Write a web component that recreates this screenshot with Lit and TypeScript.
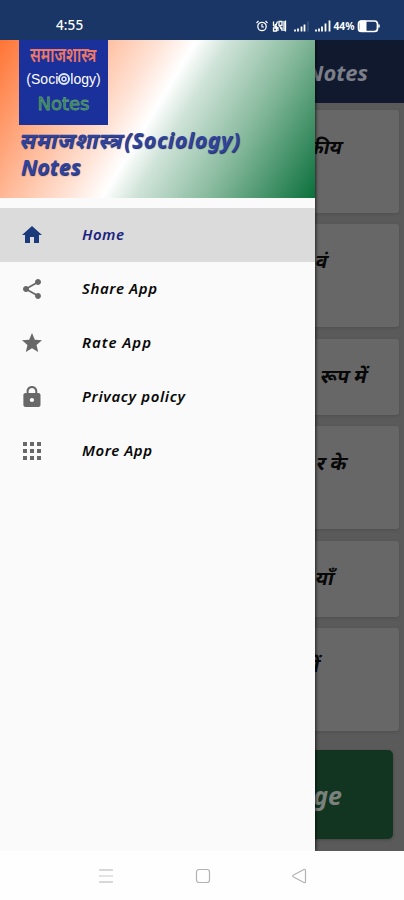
import { LitElement, html, css, svg } from "lit";
import { customElement } from "lit/decorators.js";

const menu = [
  { label: "Home", width: 42, active: true, icon: svg`<path d="M10 20v-6h4v6h5v-8h3L12 3 2 12h3v8z"/>` },
  { label: "Share App", width: 75, icon: svg`<path d="M18 16.08c-.76 0-1.44.3-1.96.77L8.91 12.7c.05-.23.09-.46.09-.7s-.04-.47-.09-.7l7.05-4.11c.54.5 1.25.81 2.04.81 1.66 0 3-1.34 3-3s-1.34-3-3-3-3 1.34-3 3c0 .24.04.47.09.7L8.04 9.81C7.5 9.31 6.79 9 6 9c-1.66 0-3 1.34-3 3s1.34 3 3 3c.79 0 1.5-.31 2.04-.81l7.12 4.16c-.05.21-.08.43-.08.65 0 1.61 1.31 2.92 2.92 2.92s2.92-1.31 2.92-2.92-1.31-2.92-2.92-2.92z"/>` },
  { label: "Rate App", width: 69, icon: svg`<path d="M12 17.27 18.18 21l-1.64-7.03L22 9.24l-7.19-.61L12 2 9.19 8.63 2 9.24l5.46 4.73L5.82 21z"/>` },
  { label: "Privacy policy", width: 103, icon: svg`<path d="M18 8h-1V6c0-2.76-2.24-5-5-5S7 3.240 7 6v2H6c-1.100 0-2 .9-2 2v10c0 1.100.9 2 2 2h12c1.100 0 2-.9 2-2V10c0-1.100-.9-2-2-2zm-6 9c-1.100 0-2-.9-2-2s.9-2 2-2 2 .9 2 2-.9 2-2 2zm3.100-9H8.900V6c0-1.710 1.390-3.100 3.100-3.100s3.100 1.390 3.100 3.100v2z" transform="translate(-.9 0) scale(1.070 1)"/>` },
  { label: "More App", width: 70, icon: svg`<path d="M3 3h4v4H3zm7 0h4v4h-4zm7 0h4v4h-4zM3 10h4v4H3zm7 0h4v4h-4zm7 0h4v4h-4zM3 17h4v4H3zm7 0h4v4h-4zm7 0h4v4h-4z"/>` },
];

const cards = [
  { text: "कीय", height: 103, end: 57 },
  { text: "वं", height: 103, end: 71 },
  { text: "रूप में", height: 76, end: 32 },
  { text: "र के", height: 103, end: 52 },
  { text: "याँ", height: 76, end: 65 },
  { text: "में", height: 103, end: 79 },
];

@customElement("app-root")
export class AppRoot extends LitElement {
  static styles = css`
    :host {
      display: flex;
      flex-direction: column;
      width: 404px;
      height: 900px;
      overflow: hidden;
      background: #fefefe;
      font-family: "Noto Sans", "Noto Sans Devanagari", "Open Sans", sans-serif;
    }
    * { box-sizing: border-box; }
    svg { display: block; flex: none; }
    .status {
      flex: none;
      height: 40px;
      background: #193666;
      display: flex;
      justify-content: space-between;
      padding: 12px 24px 0 56px;
      color: #fff;
    }
    .time { font: 500 13.500px/27px "Noto Sans", sans-serif; letter-spacing: .1px; }
    .main { position: relative; height: 811px; flex: none; overflow: hidden; background: #5a5a5a; }
    .appbar {
      height: 63px;
      background: #11192f;
      color: #7c7f88;
      padding-right: 36px;
      text-align: right;
      font: italic 700 22px/65px "Noto Sans", sans-serif;
    }
    .list { display: flex; flex-direction: column; gap: 11.400px; padding: 7px 5px 0; }
    .card {
      background: #676767;
      border-radius: 3px;
      box-shadow: 0 1px 3px #4448;
      padding-top: 21px;
      text-align: right;
      font-weight: 700;
      font-size: 19.500px;
      line-height: 32px;
      color: #080808;
    }
    .slant { display: inline-block; transform: skewX(-12deg); }
    .button {
      margin: 19px 11px 0;
      height: 89px;
      border-radius: 5px;
      background: #123521;
      box-shadow: 0 1px 3px #3338;
      color: #7b827e;
      text-align: right;
      padding-right: 51px;
      font: italic 700 25px/91px "Noto Sans", sans-serif;
    }
    .drawer {
      position: absolute;
      top: 0;
      left: 0;
      width: 315px;
      height: 100%;
      background: #fafafa;
      box-shadow: 1px 0 3px #000a;
    }
    .head {
      height: 158px;
      padding: 0 19px;
      background: linear-gradient(121deg, #ff7435 0%, #ffbc9c 25%, #ffe2d5 39%, #fff 48%, #cfe3d8 56%, #86b99c 74%, #0b703c 100%);
    }
    .logo {
      width: 89px;
      height: 85px;
      background: #1a309a;
      display: flex;
      flex-direction: column;
      align-items: center;
      white-space: nowrap;
    }
    .hindi { font-size: 20px; line-height: 30px; font-weight: 600; color: #ef7867; transform: scaleX(.75); }
    .socio { display: flex; align-items: center; font: 14px/18px "Liberation Sans", sans-serif; color: #fff; }
    .notes {
      font: 18px/31px "DejaVu Sans", sans-serif;
      color: #2d7a35;
      -webkit-text-stroke: .8px #5a9a80;
    }
    .title {
      margin-top: 1px;
      padding-left: 2px;
      font-size: 21.500px;
      font-weight: 700;
      font-style: italic;
      line-height: 27px;
      color: #2f439d;
      text-shadow: .5px 1px 1px #17245c;
      white-space: nowrap;
    }
    .title .slant { font-style: normal; letter-spacing: .8px; }
    .title .wide { letter-spacing: .5px; }
    .menu { padding-top: 9.500px; }
    .item {
      height: 54.200px;
      display: flex;
      align-items: center;
      padding-left: 20px;
      gap: 38px;
      color: #080808;
    }
    .item svg.icon { fill: #686868; }
    .item.active { background: #dbdbdb; color: #1a237e; }
    .item.active svg.icon { fill: #1b3a7c; }
    .label { font: italic 600 15px "Noto Sans", sans-serif; overflow: visible; fill: currentColor; }
    .nav {
      flex: 1;
      display: flex;
      justify-content: space-between;
      align-items: center;
      padding: 0 97px 0 98px;
      fill: none;
      stroke: #b2b2b2;
      stroke-width: 1.200;
    }
  `;

  render() {
    return html`
      <div class="status">
        <span class="time">4:55</span>
        <svg width="126" height="28" viewBox="254 12 126 28" fill="none" stroke="#fff">
          <circle cx="262" cy="26.500" r="4.200" stroke-width="1.300" />
          <path d="M262 24v3h2M256.500 23l2-2M267.500 23l-2-2" stroke-width="1.200" />
          <path d="M273.500 21.500v4l2 1 2-5M279 21.500h3v4h-3zM273.500 31v-3h3v3zM278 27v4M280 28h2v3M285.500 20.500v11M275 24l3 5M279 25l3 5M284 21v10" stroke-width="1.300" />
          <path d="M295 31.500v-2M298 31.500v-3M301.500 31.500v-5M304.500 31.500v-7" stroke-width="1.800" />
          <path d="M308 31.500v-10" opacity=".25" />
          <path d="M316 31.500v-2M319 31.500v-3M322 31.500v-5M325.500 31.500v-8M329.500 31.500v-11" stroke-width="1.800" />
          <text x="333.500" y="30" textLength="21" lengthAdjust="spacingAndGlyphs" fill="#fff" stroke="none" font-family="Noto Sans, sans-serif" font-weight="700" font-size="10.500">44%</text>
          <rect x="358.500" y="21" width="19" height="10.500" rx="3" stroke-width="1.700" />
          <path d="M360 21h6v10h-6z" fill="#fff" />
          <path d="M379 24.500v3" stroke-width="1.500" />
        </svg>
      </div>
      <div class="main">
        <div class="appbar">Notes</div>
        <div class="list">
          ${cards.map((c) => html`<div class="card" style="height:${c.height}px;padding-right:${c.end}px"><span class="slant">${c.text}</span></div>`)}
        </div>
        <div class="button">ge</div>
        <div class="drawer">
          <div class="head">
            <div class="logo">
              <span class="hindi">समाजशास्त्र</span>
              <span class="socio">(Soci<svg width="12" height="14" viewBox="0 0 12 14" fill="none" stroke="#dfe8ff"><circle cx="6" cy="7" r="5" stroke-width="2" /><circle cx="6" cy="7" r="2" stroke-width="1.500" /></svg>logy)</span>
              <span class="notes">Notes</span>
            </div>
            <div class="title"><span class="slant">समाजशास्त्र</span><span class="wide">(Sociology)</span><br />Notes</div>
          </div>
          <div class="menu">
            ${menu.map((m) => html`
              <div class="item ${m.active ? "active" : ""}">
                <svg class="icon" width="24" height="24" viewBox="0 0 24 24">${m.icon}</svg>
                <svg class="label" width=${m.width} height="20"><text y="15" textLength=${m.width}>${m.label}</text></svg>
              </div>`)}
          </div>
        </div>
      </div>
      <div class="nav">
        <svg width="16" height="16"><path d="M1 2h14M1 14h14" /><path d="M1 8h14" stroke="#d0d0d0" /></svg>
        <svg width="16" height="16"><rect x="1.500" y="1.500" width="13" height="13" rx="2.500" /></svg>
        <svg width="16" height="16"><path d="M13 1.500 2.500 7q-1.500 1 0 2L13 14.500q1.500.5 1.500-1V3q0-2-1.500-1.500z" /></svg>
      </div>
    `;
  }
}
